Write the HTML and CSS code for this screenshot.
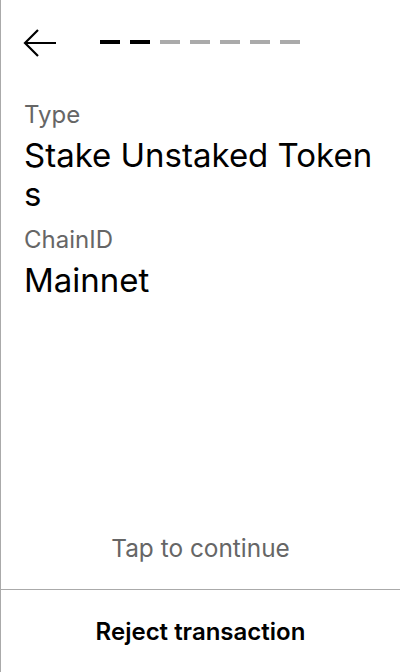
FILE: index.html
```html
<!DOCTYPE html>
<html>
<head>
<meta charset="utf-8">
<link rel="stylesheet" href="styles.css">
</head>
<body>
<div class="screen">
  <div class="header">
    <svg class="back" width="36" height="30" viewBox="0 0 36 30">
      <path d="M3 15 H34 M16 2 L3 15 L16 28" fill="none" stroke="#000" stroke-width="2.2"/>
    </svg>
    <div class="progress">
      <span class="dash done"></span>
      <span class="dash done"></span>
      <span class="dash"></span>
      <span class="dash"></span>
      <span class="dash"></span>
      <span class="dash"></span>
      <span class="dash"></span>
    </div>
  </div>
  <div class="content">
    <div class="field">
      <div class="label">Type</div>
      <div class="value">Stake Unstaked Tokens</div>
    </div>
    <div class="field">
      <div class="label">ChainID</div>
      <div class="value">Mainnet</div>
    </div>
  </div>
  <div class="tap">Tap to continue</div>
  <div class="reject">Reject transaction</div>
</div>
</body>
</html>
```
FILE: styles.css
```css
html, body {
  margin: 0;
  padding: 0;
  background: #fff;
}
body {
  font-family: Inter, "Noto Sans", sans-serif;
  color: #000;
}
.screen {
  height: 672px;
  box-sizing: border-box;
  border-left: 1px solid #aaa;
  display: flex;
  flex-direction: column;
}
.header {
  display: flex;
  align-items: flex-start;
  padding: 28px 0 0 21px;
  gap: 42px;
}
.back {
  display: block;
}
.progress {
  display: flex;
  gap: 10px;
  margin-top: 12px;
}
.dash {
  width: 20px;
  height: 4px;
  background: #aaa;
}
.dash.done {
  background: #000;
}
.content {
  flex: 1;
  padding: 42px 23px 0 23px;
  display: flex;
  flex-direction: column;
  gap: 11px;
}
.field {
  display: flex;
  flex-direction: column;
  gap: 7px;
}
.label {
  font-size: 24px;
  line-height: 29px;
  color: #666;
}
.value {
  font-size: 33px;
  line-height: 39px;
  word-break: break-all;
}
.tap {
  text-align: center;
  font-size: 24.4px;
  line-height: 29px;
  color: #666;
  padding-bottom: 26px;
}
.reject {
  border-top: 1px solid #aaa;
  height: 83px;
  box-sizing: border-box;
  display: flex;
  align-items: center;
  justify-content: center;
  font-size: 24px;
  font-weight: 600;
}
```
